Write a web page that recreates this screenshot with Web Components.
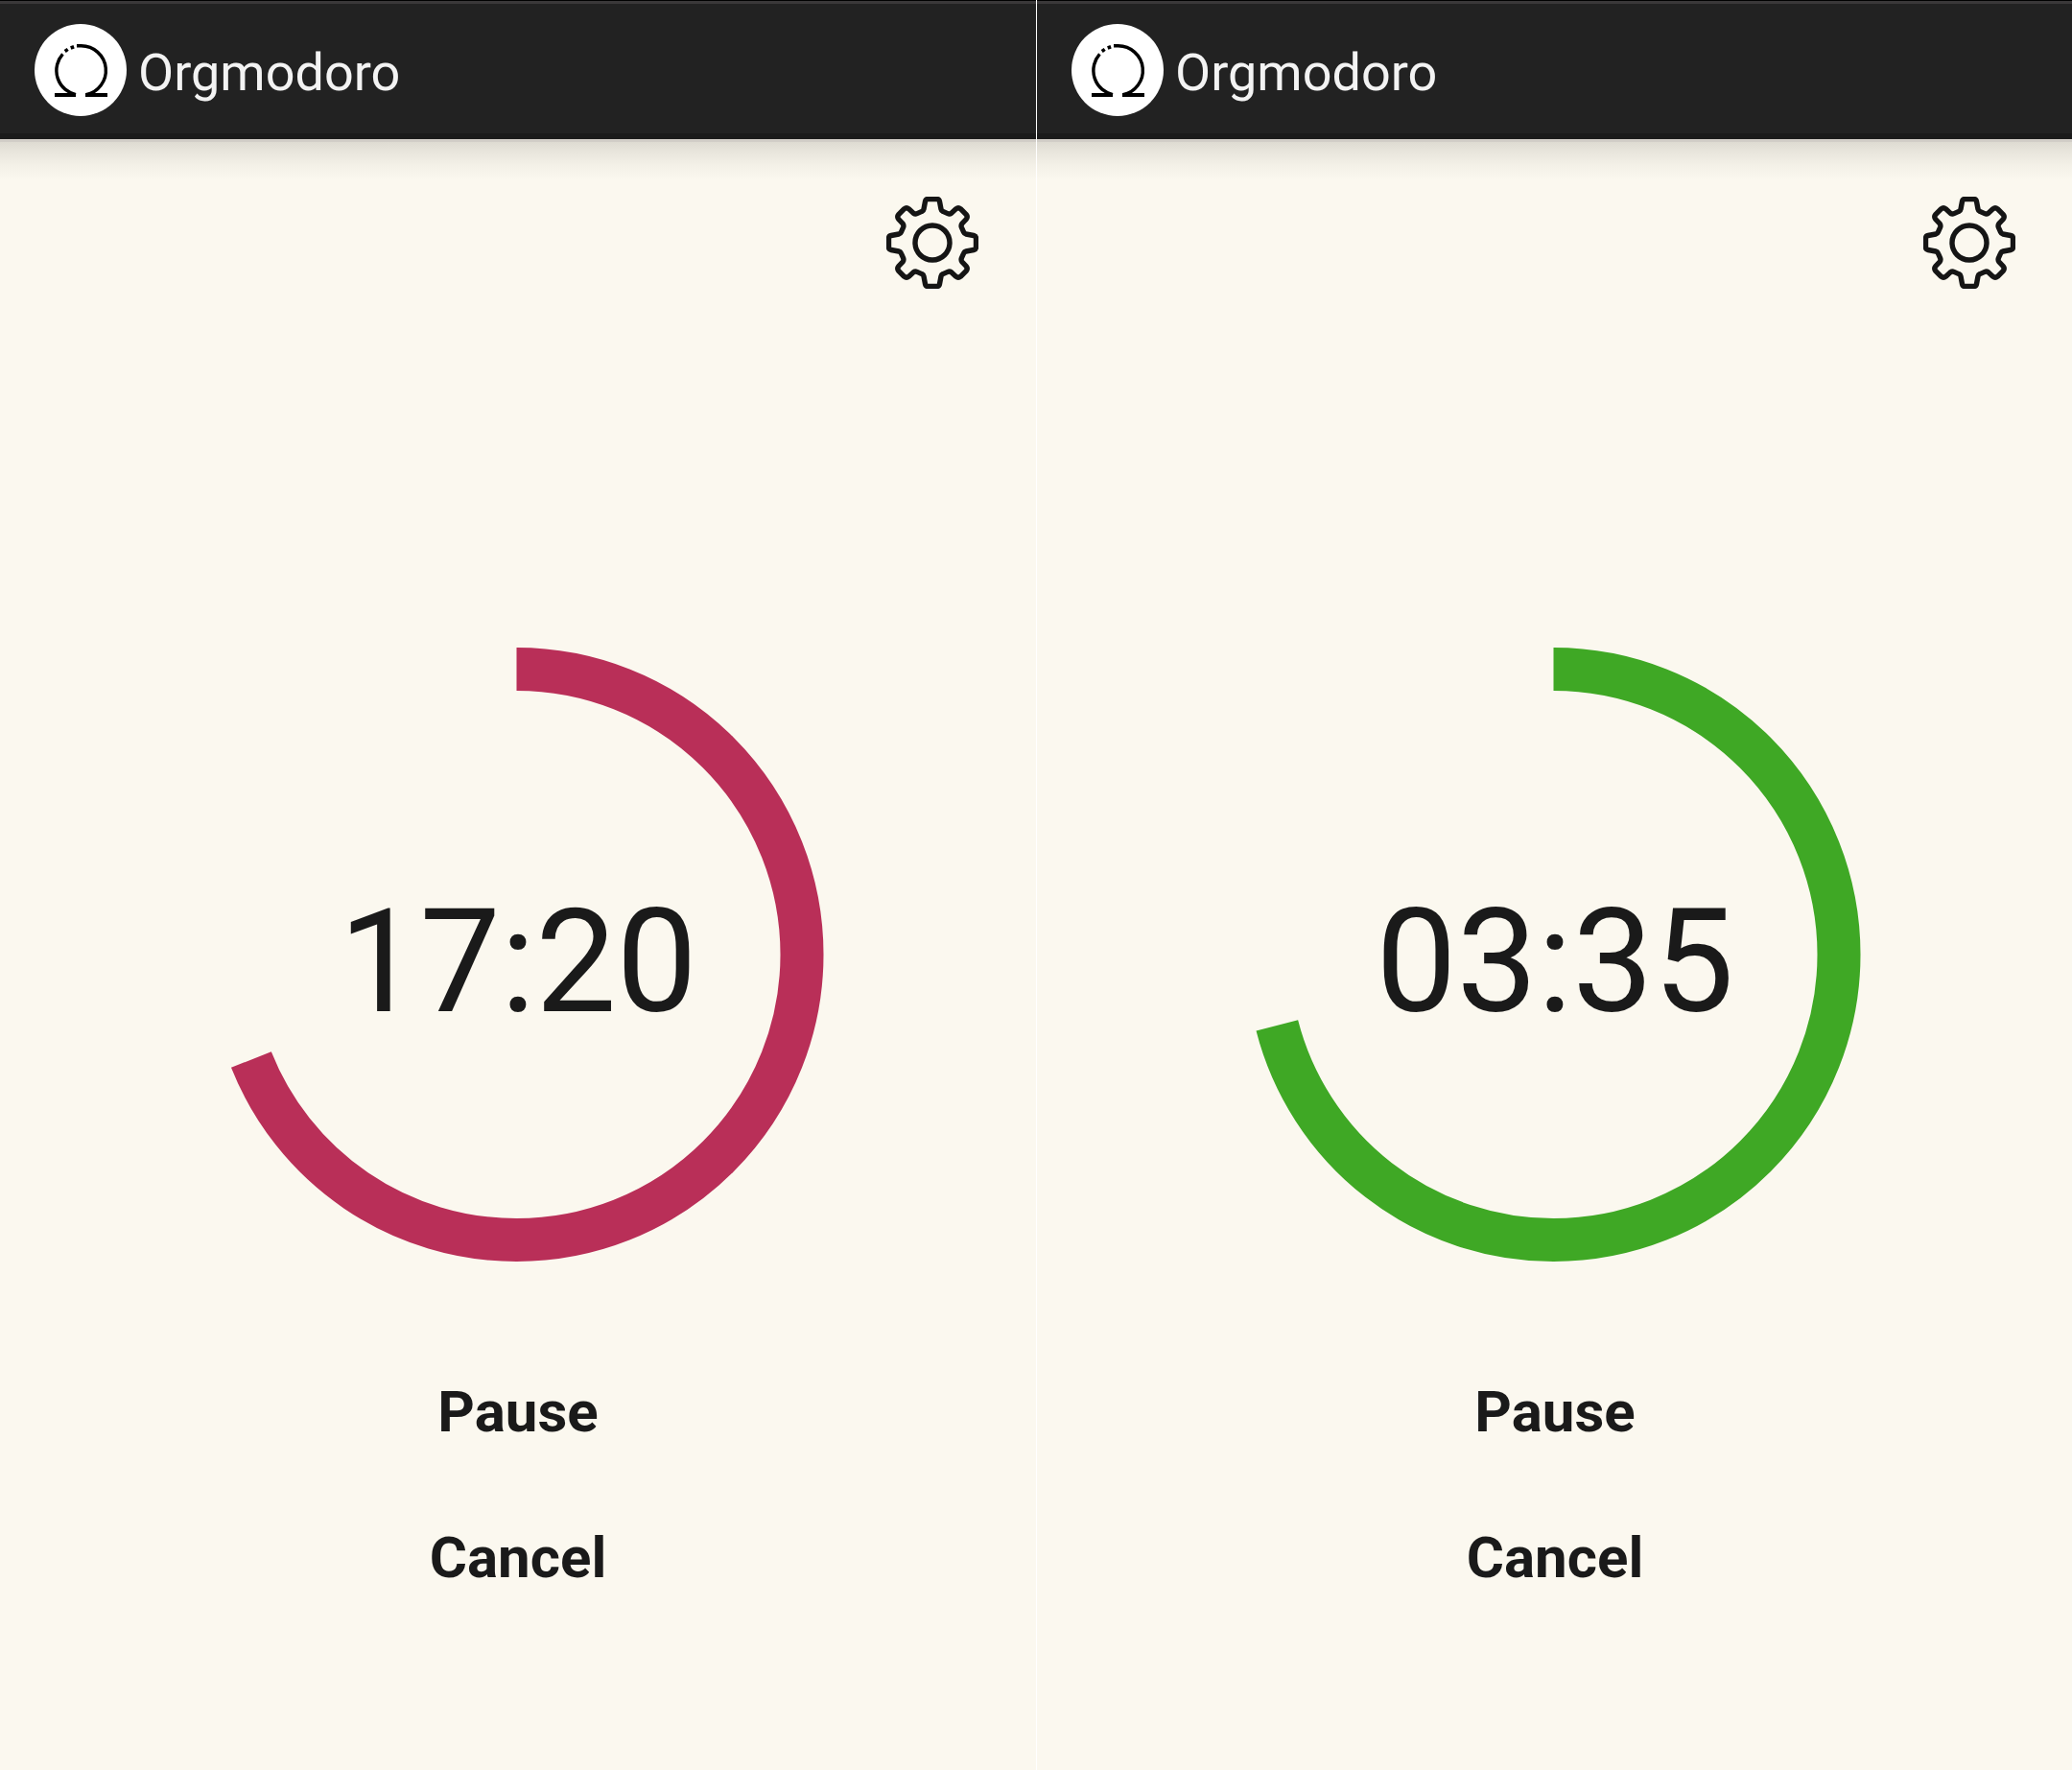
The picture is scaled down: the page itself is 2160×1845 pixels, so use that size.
<!DOCTYPE html>
<html lang="en">
<head>
<meta charset="utf-8">
<meta name="viewport" content="width=device-width, initial-scale=1">
<title>Orgmodoro</title>
<style>
  body { margin: 0; background: #fbf8ef; color: #1a1a1a; font-family: Roboto, "Liberation Sans", sans-serif; }
</style>
</head>
<body>
<screen-pair>
  <app-screen>
    <app-bar slot="bar">Orgmodoro</app-bar>
    <settings-button slot="tools"></settings-button>
    <timer-ring progress="0.69" style="--ring: #b92f58">17:20</timer-ring>
    <text-button slot="actions">Pause</text-button>
    <text-button slot="actions">Cancel</text-button>
  </app-screen>
  <app-screen>
    <app-bar slot="bar">Orgmodoro</app-bar>
    <settings-button slot="tools"></settings-button>
    <timer-ring progress="0.71" style="--ring: #3fa825">03:35</timer-ring>
    <text-button slot="actions">Pause</text-button>
    <text-button slot="actions">Cancel</text-button>
  </app-screen>
</screen-pair>

<script>
const define = (name, html, setup) => {
  const template = document.createElement('template');
  template.innerHTML = html;
  customElements.define(name, class extends HTMLElement {
    constructor() {
      super();
      this.attachShadow({ mode: 'open' }).append(template.content.cloneNode(true));
    }
    connectedCallback() { if (setup) setup(this, this.shadowRoot); }
  });
};

define('screen-pair', `
  <style>
    :host { display: grid; grid-template-columns: 1fr 1fr; min-height: 100vh; overflow: hidden; }
    /* the divider is the second screen's border; the margin keeps both contents equally wide */
    ::slotted(:last-child) { border-left: 1px solid #fff; margin-right: -1px; }
  </style>
  <slot></slot>`);

define('app-screen', `
  <style>
    :host { display: flex; flex-direction: column; }
    main { flex: 1; display: flex; flex-direction: column; background: linear-gradient(#d1cdc7 3px, #dedbd2 3px, #e9e6dd 14px, #f4f1e8 28px, #fbf8ef 42px); }
    .tools { display: flex; justify-content: flex-end; padding: 60px 60px 0; }
    .timer { display: flex; justify-content: center; padding-top: 374px; }
    .actions { display: flex; flex-direction: column; align-items: center; padding: 81px 0 40px; }
  </style>
  <slot name="bar"></slot>
  <main>
    <div class="tools"><slot name="tools"></slot></div>
    <div class="timer"><slot></slot></div>
    <div class="actions"><slot name="actions"></slot></div>
  </main>`);

define('app-bar', `
  <style>
    :host { display: block; }
    header { display: flex; align-items: center; gap: 12px; box-sizing: border-box; height: 145px; padding: 1px 36px 0;
      background: linear-gradient(#000 1px, #3a3839 1px, #3a3839 4px, #222 4px, #222 139px, #1b1b1b 139px); }
    svg { width: 96px; height: 96px; flex: none; }
    h1 { margin: 0; padding-top: 6px; font-size: 54px; line-height: 64px; font-weight: 400; color: #f3f3f3; }
  </style>
  <header>
    <svg viewBox="0 0 96 96" aria-hidden="true">
      <circle cx="48" cy="48" r="48" fill="#fff"/>
      <g fill="none" stroke="#000" stroke-width="3.4">
        <path d="M44 22.8H48.5A25.7 25.7 0 0 1 53.7 73.7"/>
        <path d="M29.4 31.4A25.7 25.7 0 0 0 43 73.6"/>
        <path stroke-width="4" d="M21 74H43M53 74H76"/>
      </g>
      <rect x="37.6" y="22.6" width="3.6" height="3.6" transform="rotate(-20 39.4 24.4)"/>
      <rect x="31.4" y="25.6" width="3.6" height="3.6" transform="rotate(-35 33.2 27.4)"/>
    </svg>
    <h1><slot></slot></h1>
  </header>`);

define('settings-button', `
  <style>
    :host { display: block; }
    button { display: block; border: 0; padding: 0; background: none; cursor: pointer; }
    svg { display: block; width: 96px; height: 96px; }
  </style>
  <button type="button" aria-label="Settings">
    <svg viewBox="0 0 96 96" fill="none" stroke="#151515" stroke-width="5.4" aria-hidden="true">
      <defs><path id="q" d="M48 2.5H52.5Q55 2.5 55.5 5L57 13Q57.3 14.7 59 15.4L64 17.6Q66 18.4 67.8 17.2L72.5 12.8Q75 10.8 77.5 12.8L83.2 18.5Q85.2 21 83.2 23.5L78.8 28.2Q77.6 30 78.4 32L80.6 37Q81.3 38.7 83 39L91 40.5Q93.5 41 93.5 43.5V48"/></defs>
      <use href="#q"/>
      <use href="#q" transform="rotate(90 48 48)"/>
      <use href="#q" transform="rotate(180 48 48)"/>
      <use href="#q" transform="rotate(270 48 48)"/>
      <circle cx="48" cy="48" r="18"/>
    </svg>
  </button>`);

define('timer-ring', `
  <style>
    :host { display: grid; place-items: center; }
    svg, time { grid-area: 1 / 1; }
    svg { width: 642px; height: 640px; }
    circle { fill: none; stroke: var(--ring); stroke-width: 45; }
    time { padding-top: 16px; font-size: 150px; line-height: 176px; }
  </style>
  <svg viewBox="0 0 642 640" aria-hidden="true">
    <circle cx="319.5" cy="320" r="297.5" pathLength="100" transform="rotate(-90 319.5 320)"/>
  </svg>
  <time><slot></slot></time>`,
  (host, root) => {
    root.querySelector('circle').setAttribute('stroke-dasharray', host.getAttribute('progress') * 100 + ' 100');
  });

define('text-button', `
  <style>
    :host { display: block; }
    button { display: block; border: 0; background: none; padding: 40px 48px; font: 700 60px/72px Roboto, "Liberation Sans", sans-serif; color: inherit; cursor: pointer; }
  </style>
  <button type="button"><slot></slot></button>`);
</script>
</body>
</html>
